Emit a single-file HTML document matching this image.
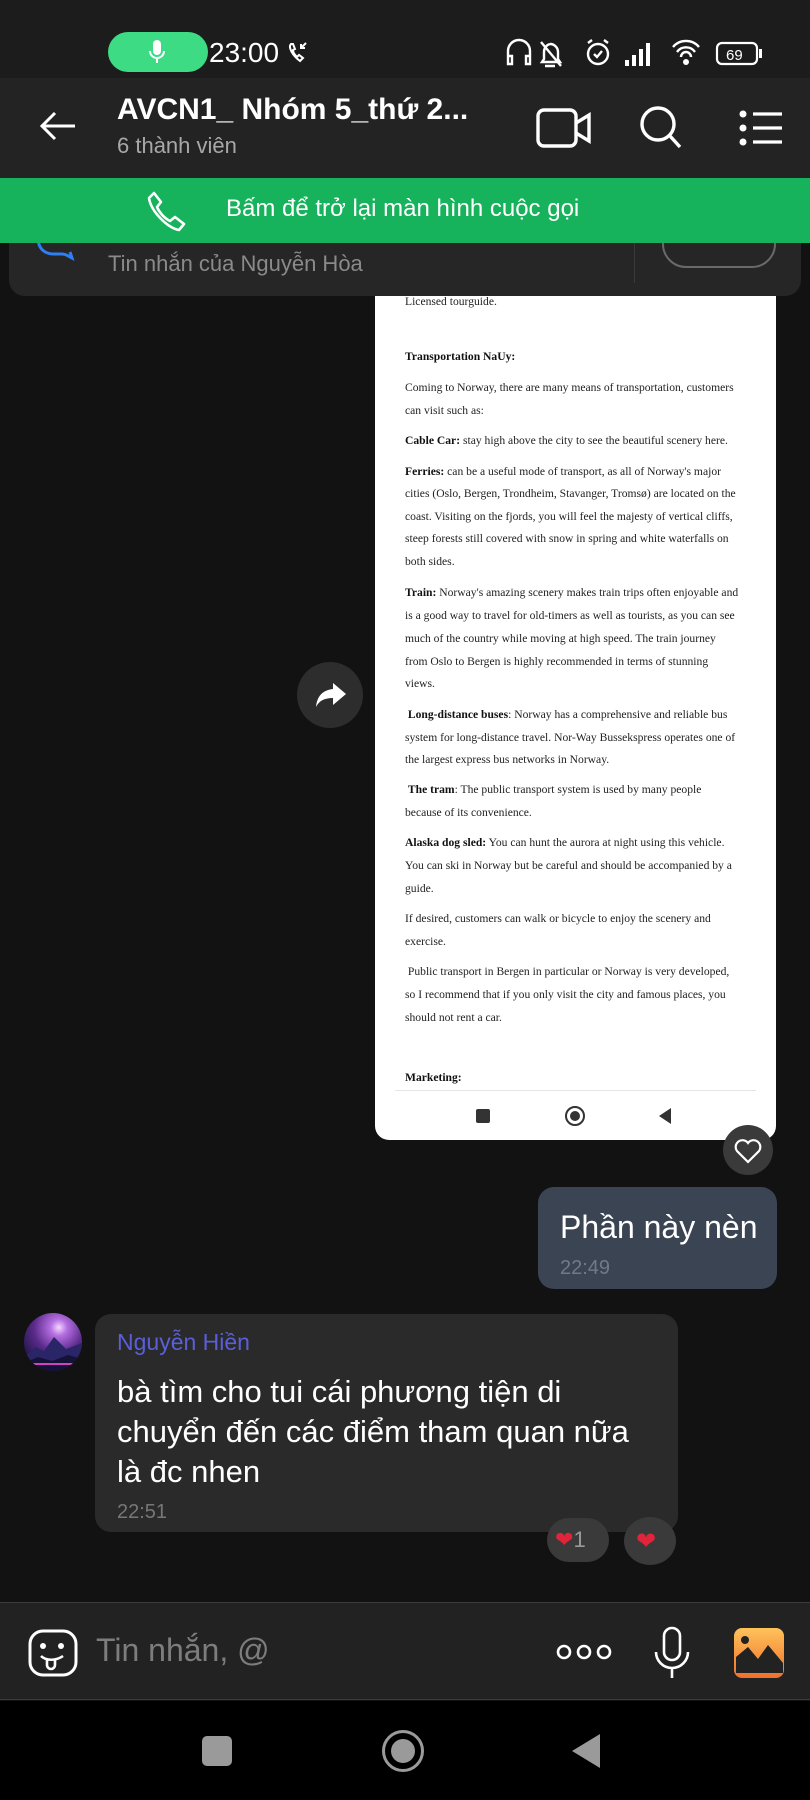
<!DOCTYPE html>
<html><head><meta charset="utf-8"><style>
*{margin:0;padding:0;box-sizing:border-box}
body{width:810px;height:1800px;background:#121212;position:relative;overflow:hidden;font-family:"Liberation Sans","Noto Sans CJK SC",sans-serif;color:#fff}
.a{position:absolute}
.doc span{position:absolute;left:30px;white-space:nowrap;font-family:"Liberation Serif",serif;font-size:11.6px;color:#222}
.doc b{font-weight:bold;color:#111}
</style></head><body>
<!-- pinned card -->
<div class="a" style="left:9px;top:230px;width:792px;height:66px;background:#262626;border-radius:0 0 16px 16px"></div>
<svg class="a" style="left:34px;top:236px" width="46" height="30" viewBox="0 0 46 30"><path d="M4 2c0 10 6 16 16 16h8c4 0 6 2 10 4l-2-6" stroke="#2d7ff2" stroke-width="3" fill="none"/></svg>
<div class="a" style="left:108px;top:251px;font-size:22px;color:#8a8a8a">Tin nhắn của Nguyễn Hòa</div>
<div class="a" style="left:634px;top:243px;width:1px;height:40px;background:#3a3a3a"></div>
<div class="a" style="left:662px;top:220px;width:114px;height:48px;border:2px solid #6a6a6a;border-radius:24px;clip-path:inset(23px 0 0 0)"></div>
<!-- status bar -->
<div class="a" style="left:0;top:0;width:810px;height:78px;background:#1c1c1c"></div>
<div class="a" style="left:108px;top:32px;width:100px;height:40px;border-radius:20px;background:#3ddc84"></div>
<svg class="a" style="left:146px;top:38px" width="22" height="30" viewBox="0 0 22 30"><rect x="7" y="2" width="8" height="15" rx="4" fill="#fff"/><path d="M4 13a7 7 0 0 0 14 0M11 20v5" stroke="#fff" stroke-width="2" fill="none"/></svg>
<div class="a" style="left:209px;top:37px;font-size:28px;color:#fff">23:00</div>
<svg class="a" style="left:286px;top:40px" width="24" height="26" viewBox="0 0 24 26"><path d="M5 4c-3 3 1 11 9 17l3-3-4-3-2 2c-2-2-4-5-4-7l2-1-2-5z" fill="none" stroke="#fff" stroke-width="2"/><path d="M20 3l-5 5M15 4v4h4" stroke="#fff" stroke-width="2" fill="none"/></svg>
<svg class="a" style="left:505px;top:36px" width="260" height="34" viewBox="0 0 260 34"><g stroke="#fff" stroke-width="2.4" fill="none"><path d="M3 26V15a11 11 0 0 1 22 0v11M3 20h4v8H3zM21 20h4v8h-4z"/><path d="M45 8a8 8 0 0 1 8 8v7l2 3H37l2-3v-7a8 8 0 0 1 6-8M40 30h10M36 6l20 24"/><circle cx="93" cy="18" r="10"/><path d="M89 18l3 3 5-6M83 7l4-3M103 7l-4-3"/><path d="M168 11a17 17 0 0 1 26 0M172 16a11 11 0 0 1 18 0M176 21a5 5 0 0 1 10 0"/></g><g fill="#fff"><rect x="120" y="24" width="4" height="6"/><rect x="127" y="19" width="4" height="11"/><rect x="134" y="13" width="4" height="17"/><rect x="141" y="7" width="4" height="23"/><circle cx="181" cy="26" r="3"/></g><rect x="212" y="7" width="40" height="21" rx="5" stroke="#fff" stroke-width="2.2" fill="none"/><rect x="254" y="13" width="3" height="9" fill="#fff"/><text x="221" y="24" font-size="15" fill="#fff" font-family="Liberation Sans">69</text></svg>
<!-- header -->
<div class="a" style="left:0;top:78px;width:810px;height:100px;background:#232323"></div>
<svg class="a" style="left:38px;top:110px" width="40" height="32" viewBox="0 0 40 32"><path d="M37 16H4M17 3L4 16l13 13" stroke="#fff" stroke-width="3" fill="none"/></svg>
<div class="a" style="left:117px;top:93px;font-size:30px;font-weight:bold">AVCN1_ Nhóm 5_thứ 2...</div>
<div class="a" style="left:117px;top:133px;font-size:22px;color:#a8a8a8">6 thành viên</div>
<svg class="a" style="left:535px;top:106px" width="58" height="44" viewBox="0 0 58 44"><rect x="3" y="4" width="38" height="36" rx="6" stroke="#fff" stroke-width="3.4" fill="none"/><path d="M41 17l13-8v26l-13-8" stroke="#fff" stroke-width="3.4" fill="none"/></svg>
<svg class="a" style="left:638px;top:104px" width="46" height="46" viewBox="0 0 46 46"><circle cx="20" cy="20" r="16" stroke="#fff" stroke-width="3.4" fill="none"/><path d="M32 32l10 11" stroke="#fff" stroke-width="3.4"/></svg>
<svg class="a" style="left:738px;top:108px" width="46" height="40" viewBox="0 0 46 40"><g fill="#fff"><circle cx="5" cy="6" r="3.5"/><circle cx="5" cy="20" r="3.5"/><circle cx="5" cy="34" r="3.5"/></g><path d="M15 6h29M15 20h29M15 34h29" stroke="#fff" stroke-width="3.2"/></svg>
<!-- green banner -->
<div class="a" style="left:0;top:178px;width:810px;height:65px;background:#17b35c"></div>
<svg class="a" style="left:146px;top:190px" width="42" height="42" viewBox="0 0 42 42"><path d="M8 3l7 9-4 5c2 5 7 11 13 14l5-4 9 7-5 6C22 38 5 22 3 8z" stroke="#fff" stroke-width="2.6" fill="none" stroke-linejoin="round"/></svg>
<div class="a" style="left:226px;top:195px;font-size:24px;color:#fff">Bấm để trở lại màn hình cuộc gọi</div>
<!-- document -->
<div class="a doc" style="left:375px;top:296px;width:401px;height:844px;background:#fff;border-radius:0 0 14px 14px;overflow:hidden">
<span style="top:-1px">Licensed tourguide.</span>
<span style="top:54px"><b>Transportation NaUy:</b></span>
<span style="top:85px">Coming to Norway, there are many means of transportation, customers</span>
<span style="top:108px">can visit such as:</span>
<span style="top:138px"><b>Cable Car:</b> stay high above the city to see the beautiful scenery here.</span>
<span style="top:169px"><b>Ferries:</b> can be a useful mode of transport, as all of Norway's major</span>
<span style="top:191px">cities (Oslo, Bergen, Trondheim, Stavanger, Tromsø) are located on the</span>
<span style="top:214px">coast. Visiting on the fjords, you will feel the majesty of vertical cliffs,</span>
<span style="top:236px">steep forests still covered with snow in spring and white waterfalls on</span>
<span style="top:259px">both sides.</span>
<span style="top:290px"><b>Train:</b> Norway's amazing scenery makes train trips often enjoyable and</span>
<span style="top:313px">is a good way to travel for old-timers as well as tourists, as you can see</span>
<span style="top:336px">much of the country while moving at high speed. The train journey</span>
<span style="top:359px">from Oslo to Bergen is highly recommended in terms of stunning</span>
<span style="top:381px">views.</span>
<span style="top:412px">&nbsp;<b>Long-distance buses</b>: Norway has a comprehensive and reliable bus</span>
<span style="top:435px">system for long-distance travel. Nor-Way Bussekspress operates one of</span>
<span style="top:457px">the largest express bus networks in Norway.</span>
<span style="top:487px">&nbsp;<b>The tram</b>: The public transport system is used by many people</span>
<span style="top:510px">because of its convenience.</span>
<span style="top:540px"><b>Alaska dog sled:</b> You can hunt the aurora at night using this vehicle.</span>
<span style="top:563px">You can ski in Norway but be careful and should be accompanied by a</span>
<span style="top:586px">guide.</span>
<span style="top:616px">If desired, customers can walk or bicycle to enjoy the scenery and</span>
<span style="top:639px">exercise.</span>
<span style="top:669px">&nbsp;Public transport in Bergen in particular or Norway is very developed,</span>
<span style="top:692px">so I recommend that if you only visit the city and famous places, you</span>
<span style="top:715px">should not rent a car.</span>
<span style="top:775px"><b>Marketing:</b></span>
<div style="position:absolute;left:20px;top:794px;width:361px;height:1px;background:#e4e4e4"></div>
<div style="position:absolute;left:101px;top:813px;width:14px;height:14px;background:#333;border-radius:2px"></div>
<div style="position:absolute;left:190px;top:810px;width:20px;height:20px;border:2px solid #333;border-radius:50%"><div style="margin:3px;width:10px;height:10px;background:#333;border-radius:50%"></div></div>
<svg style="position:absolute;left:283px;top:811px" width="14" height="18" viewBox="0 0 14 18"><path d="M13 1v16L1 9z" fill="#333"/></svg>
</div>
<!-- share -->
<div class="a" style="left:297px;top:662px;width:66px;height:66px;border-radius:50%;background:#2d2d2d"></div>
<svg class="a" style="left:315px;top:682px" width="32" height="26" viewBox="0 0 32 26"><path d="M18 1l13 11-13 11v-7C9 16 4 19 1 25 2 14 8 8 18 7z" fill="#fff"/></svg>
<!-- heart reaction -->
<div class="a" style="left:723px;top:1125px;width:50px;height:50px;border-radius:50%;background:#3a3a3a"></div>
<svg class="a" style="left:734px;top:1138px" width="28" height="26" viewBox="0 0 28 26"><path d="M14 24L3 13a6.5 6.5 0 0 1 11-8 6.5 6.5 0 0 1 11 8z" stroke="#fff" stroke-width="2.2" fill="none"/></svg>
<!-- my bubble -->
<div class="a" style="left:538px;top:1187px;width:239px;height:102px;border-radius:16px;background:#3a4452"></div>
<div class="a" style="left:560px;top:1209px;font-size:32px;color:#fff">Phần này nèn</div>
<div class="a" style="left:560px;top:1257px;font-size:20px;color:#6f7a8a">22:49</div>
<!-- avatar -->
<div class="a" style="left:24px;top:1313px;width:58px;height:58px;border-radius:50%;overflow:hidden;background:radial-gradient(circle at 60% 25%,#f4d8ff 0,#b46ee0 15%,#5a2a8a 45%,#1a1540 80%)">
<svg width="58" height="58" viewBox="0 0 58 58"><path d="M0 44l12-10 8 4 10-14 12 12 16-6v28H0z" fill="#2a2566"/><path d="M0 50l14-6 14 4 16-6 14 4v12H0z" fill="#151238"/><rect y="50" width="58" height="2" fill="#d040c0"/></svg></div>
<!-- received bubble -->
<div class="a" style="left:95px;top:1314px;width:583px;height:218px;border-radius:16px;background:#2a2a2a"></div>
<div class="a" style="left:117px;top:1329px;font-size:23px;color:#5a5fd8">Nguyễn Hiền</div>
<div class="a" style="left:117px;top:1372px;font-size:31px;line-height:40px;color:#fff">bà tìm cho tui cái phương tiện di<br>chuyển đến các điểm tham quan nữa<br>là đc nhen</div>
<div class="a" style="left:117px;top:1501px;font-size:20px;color:#777">22:51</div>
<!-- reactions -->
<div class="a" style="left:547px;top:1518px;width:62px;height:44px;border-radius:22px;background:#3a3a3a"></div>
<div class="a" style="left:555px;top:1527px;font-size:22px;color:#e0243a">❤<span style="color:#999;font-size:22px">1</span></div>
<div class="a" style="left:624px;top:1517px;width:52px;height:48px;border-radius:50%;background:#3a3a3a"></div>
<div class="a" style="left:636px;top:1527px;font-size:24px;color:#e0243a">❤</div>
<!-- input bar -->
<div class="a" style="left:0;top:1602px;width:810px;height:98px;background:#222;border-top:1px solid #3c3c3c;border-bottom:1px solid #3c3c3c"></div>
<svg class="a" style="left:27px;top:1628px" width="52" height="50" viewBox="0 0 52 50"><rect x="3" y="3" width="46" height="44" rx="13" stroke="#fff" stroke-width="3" fill="none"/><circle cx="16" cy="18" r="3" fill="#fff"/><circle cx="34" cy="18" r="3" fill="#fff"/><path d="M14 28c5 5 15 5 22 0M20 31v6a4 4 0 0 0 8 0v-5" stroke="#fff" stroke-width="2.6" fill="none"/></svg>
<div class="a" style="left:96px;top:1632px;font-size:32px;color:#7d7d7d">Tin nhắn, @</div>
<svg class="a" style="left:555px;top:1642px" width="58" height="20" viewBox="0 0 58 20"><g stroke="#fff" stroke-width="2.6" fill="none"><circle cx="9" cy="10" r="6"/><circle cx="29" cy="10" r="6"/><circle cx="49" cy="10" r="6"/></g></svg>
<svg class="a" style="left:652px;top:1626px" width="40" height="54" viewBox="0 0 40 54"><rect x="12" y="2" width="16" height="32" rx="8" stroke="#fff" stroke-width="2.6" fill="none"/><path d="M4 26a16 16 0 0 0 32 0M20 42v10" stroke="#fff" stroke-width="2.6" fill="none"/></svg>
<svg class="a" style="left:733px;top:1627px" width="52" height="52" viewBox="0 0 52 52"><defs><linearGradient id="g" x1="0" y1="0" x2="0" y2="1"><stop offset="0" stop-color="#ffc25a"/><stop offset="1" stop-color="#f0702c"/></linearGradient></defs><rect x="1" y="1" width="50" height="50" rx="8" fill="url(#g)"/><path d="M3 46V30l12-10 10 12 10-14 15 18v10z" fill="#222"/><circle cx="12" cy="13" r="4" fill="#222"/></svg>
<!-- nav bar -->
<div class="a" style="left:0;top:1701px;width:810px;height:99px;background:#000"></div>
<div class="a" style="left:202px;top:1736px;width:30px;height:30px;border-radius:5px;background:#9a9a9a"></div>
<div class="a" style="left:382px;top:1730px;width:42px;height:42px;border-radius:50%;border:3px solid #9a9a9a"><div style="margin:6px;width:24px;height:24px;border-radius:50%;background:#9a9a9a"></div></div>
<svg class="a" style="left:570px;top:1732px" width="32" height="38" viewBox="0 0 32 38"><path d="M30 2v34L2 19z" fill="#9a9a9a"/></svg>
</body></html>
